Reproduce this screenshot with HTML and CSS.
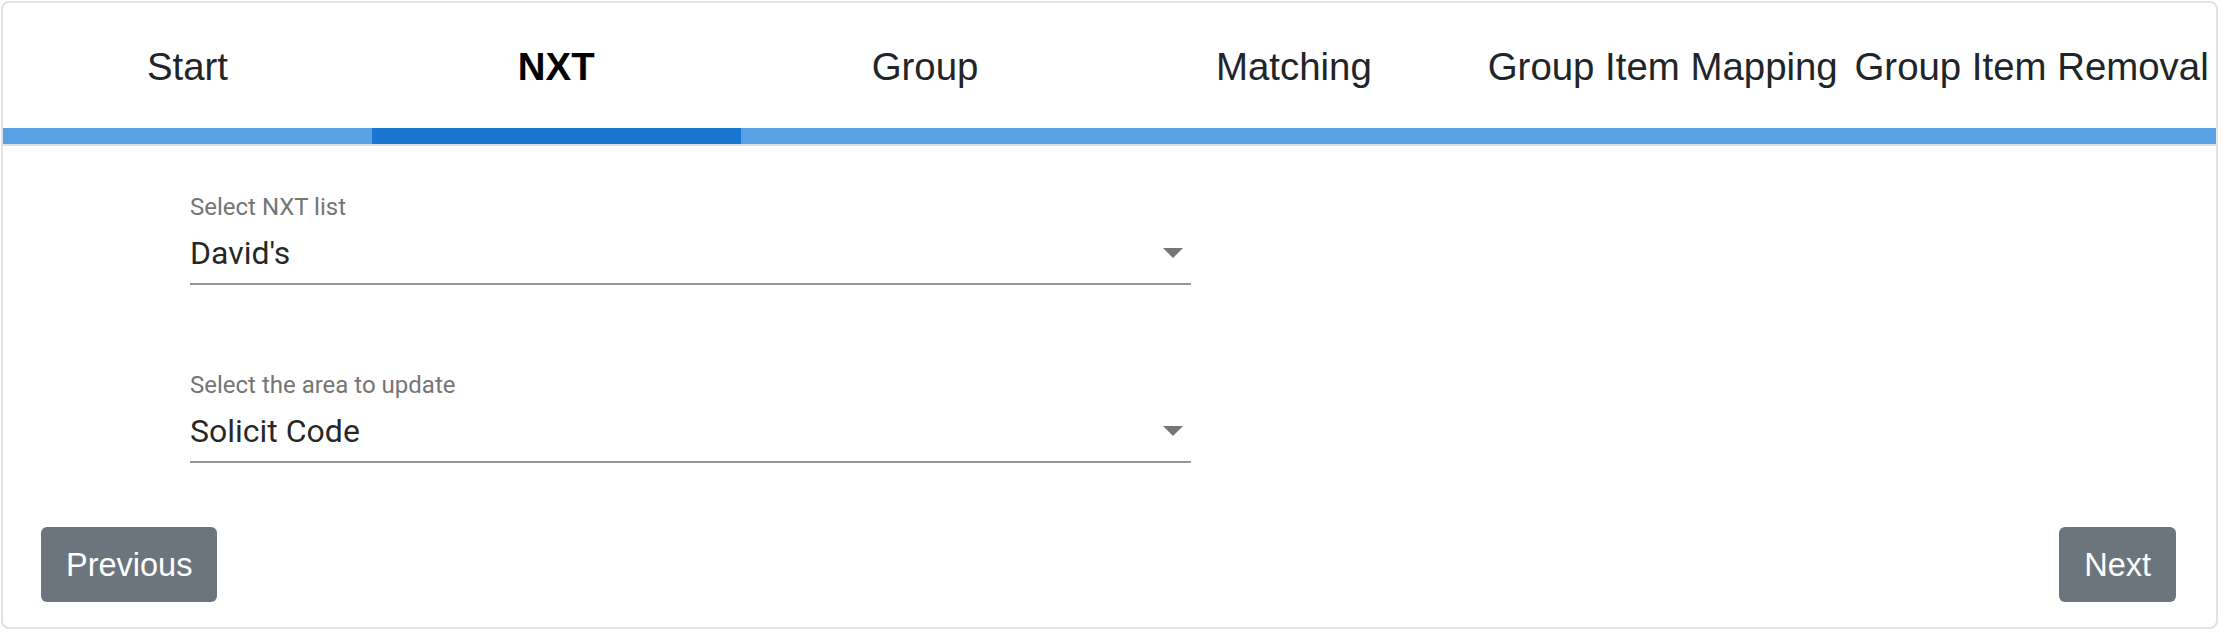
FILE: index.html
```html
<!DOCTYPE html>
<html lang="en">
<head>
<meta charset="utf-8">
<title>NXT Wizard</title>
<link rel="stylesheet" href="styles.css">
</head>
<body>
<div class="card">
  <div class="tabs">
    <div class="tab">Start</div>
    <div class="tab active">NXT</div>
    <div class="tab">Group</div>
    <div class="tab">Matching</div>
    <div class="tab">Group Item Mapping</div>
    <div class="tab">Group Item Removal</div>
  </div>
  <div class="content">
    <div class="field">
      <div class="label">Select NXT list</div>
      <div class="select">
        <span class="value">David's</span>
        <svg class="arrow" width="20" height="10" viewBox="0 0 20 10"><path d="M0 0 L20 0 L10 10 Z" fill="#757575"/></svg>
      </div>
    </div>
    <div class="field second">
      <div class="label">Select the area to update</div>
      <div class="select">
        <span class="value">Solicit Code</span>
        <svg class="arrow" width="20" height="10" viewBox="0 0 20 10"><path d="M0 0 L20 0 L10 10 Z" fill="#757575"/></svg>
      </div>
    </div>
  </div>
  <div class="actions">
    <button class="btn">Previous</button>
    <button class="btn">Next</button>
  </div>
</div>
</body>
</html>
```
FILE: styles.css
```css
html, body {
  margin: 0;
  padding: 0;
  background: #ffffff;
}
body {
  font-family: "Liberation Sans", Arial, sans-serif;
}
.card {
  margin: 1px 8px 0 1px;
  border: 2px solid #e2e2e2;
  border-radius: 8px;
  overflow: hidden;
  background: #fff;
}
.tabs {
  display: grid;
  grid-template-columns: repeat(6, 1fr);
  border-bottom: 2px solid #e0e0e0;
}
.tab {
  height: 123px;
  padding-top: 2px;
  display: flex;
  align-items: center;
  justify-content: center;
  font-size: 38.4px;
  color: #212529;
  white-space: nowrap;
  border-bottom: 16px solid #58a1e4;
}
.tab.active {
  font-weight: bold;
  color: #000;
  border-bottom-color: #1976d2;
}
.content {
  padding: 47px 0 0 187px;
}
.field {
  width: 1001px;
  font-family: Roboto, "Liberation Sans", sans-serif;
}
.field.second {
  margin-top: 86px;
}
.label {
  font-size: 24px;
  line-height: 29px;
  height: 29px;
  color: #757575;
}
.select {
  display: flex;
  align-items: center;
  justify-content: space-between;
  height: 50px;
  padding: 6px 8px 5px 0;
  border-bottom: 2px solid #949494;
}
.value {
  font-size: 32px;
  color: rgba(0, 0, 0, 0.87);
}
.arrow {
  display: block;
}
.actions {
  display: flex;
  justify-content: space-between;
  padding: 64px 40px 25px 38px;
}
.btn {
  font-family: "Liberation Sans", Arial, sans-serif;
  font-size: 32.5px;
  line-height: 48px;
  padding: 14px 25px 13px;
  color: #fff;
  background: #6c757d;
  border: none;
  border-radius: 6px;
}
```
